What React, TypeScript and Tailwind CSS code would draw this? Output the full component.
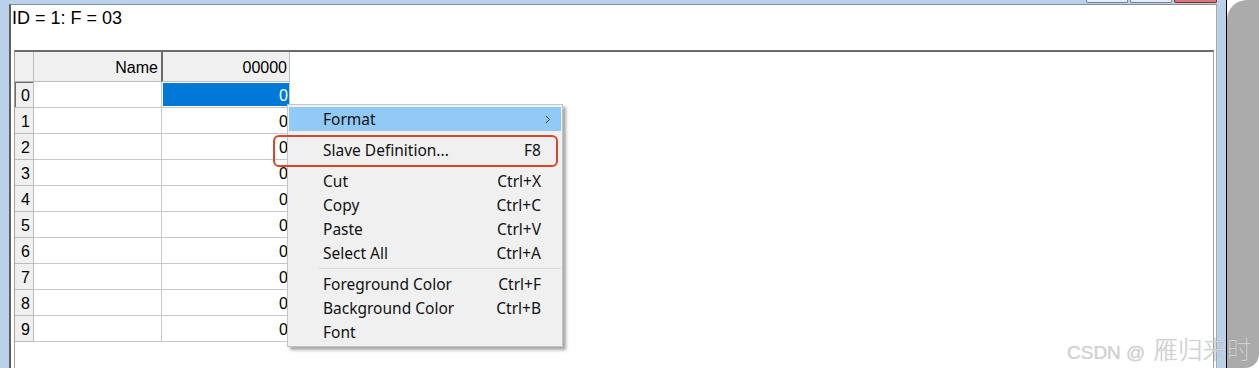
import React from "react";

type MenuItem =
  | { kind: "item"; label: string; shortcut?: string; arrow?: boolean; active?: boolean }
  | { kind: "sep"; line: boolean };

const menuItems: MenuItem[] = [
  { kind: "item", label: "Format", arrow: true, active: true },
  { kind: "sep", line: false },
  { kind: "item", label: "Slave Definition...", shortcut: "F8" },
  { kind: "sep", line: false },
  { kind: "item", label: "Cut", shortcut: "Ctrl+X" },
  { kind: "item", label: "Copy", shortcut: "Ctrl+C" },
  { kind: "item", label: "Paste", shortcut: "Ctrl+V" },
  { kind: "item", label: "Select All", shortcut: "Ctrl+A" },
  { kind: "sep", line: true },
  { kind: "item", label: "Foreground Color", shortcut: "Ctrl+F" },
  { kind: "item", label: "Background Color", shortcut: "Ctrl+B" },
  { kind: "item", label: "Font" },
];

const rows = Array.from({ length: 10 }, (_, i) => i);

function TitleButton({ red }: { red?: boolean }) {
  return (
    <div
      className={
        red
          ? "h-[3px] w-[43px] rounded-b-[2px] border-x border-b border-[#7d2b2b] bg-[#d9787a]"
          : "h-[3px] w-[42px] rounded-b-[2px] border-x border-b border-[#6f7f9c] bg-[#e4ebf4]"
      }
    />
  );
}

function ContextMenu() {
  return (
    <div className="absolute left-[287px] top-[104px] w-[276px] border border-[#c4c4c4] bg-[#f0f0f0] px-[1px] py-[2px] font-['Noto_Sans',sans-serif] text-[15.5px] text-[#111] shadow-[3px_3px_3px_rgba(0,0,0,0.35)]">
      {menuItems.map((m, i) =>
        m.kind === "sep" ? (
          <div key={i} className="flex h-[7px] items-center pl-[30px]">
            {m.line && <div className="h-px w-full bg-[#d7d7d7]" />}
          </div>
        ) : (
          <div
            key={i}
            className={
              "flex h-[24px] items-center pl-[34px] pr-[20px] leading-[24px] " +
              (m.active ? "bg-[#91c9f7]" : "")
            }
          >
            <span className="flex-1">{m.label}</span>
            {m.shortcut && <span>{m.shortcut}</span>}
            {m.arrow && (
              <svg width="6" height="9" viewBox="0 0 6 9" className="mr-[-10px]">
                <polyline points="1,1 4.5,4.5 1,8" fill="none" stroke="#333" strokeWidth="1" />
              </svg>
            )}
          </div>
        )
      )}
    </div>
  );
}

function Grid() {
  return (
    <div className="flex flex-1 flex-col border-x border-t-2 border-x-[#a0a0a0] border-t-[#6b6b6b] bg-white text-[16px] text-black">
      {/* header */}
      <div className="flex h-[30px]">
        <div className="w-[19px] border-b border-r border-[#bcbcbc] bg-[#f0f0f0]" />
        <div className="flex w-[128px] items-center justify-end border-b border-r border-b-[#bcbcbc] border-r-[#6b6b6b] bg-[#f0f0f0] pr-[3px] pt-[2px]">
          Name
        </div>
        <div className="flex w-[128px] items-center justify-end border-b border-r border-[#bcbcbc] bg-[#f0f0f0] pr-[2px] pt-[2px] shadow-[inset_1px_0_0_#6b6b6b]">
          00000
        </div>
      </div>
      {rows.map((r) => (
        <div key={r} className="flex h-[26px]">
          <div
            className={
              "flex w-[19px] items-center border-b border-r border-[#bcbcbc] bg-[#f0f0f0] pl-[6px] pt-[2px] " +
              (r === 0 ? "shadow-[inset_1px_1px_0_#6b6b6b]" : "")
            }
          >
            {r}
          </div>
          <div className="w-[128px] border-b border-r border-[#c8c8c8]" />
          <div className="flex w-[128px] border-b border-r border-[#c8c8c8]">
            <div
              className={
                "flex flex-1 items-center justify-end pr-[1px] pt-[2px] " +
                (r === 0 ? "m-[1px] mr-0 bg-[#0078d7] text-white" : "")
              }
            >
              0
            </div>
          </div>
        </div>
      ))}
    </div>
  );
}

export default function App() {
  return (
    <div className="relative flex h-[368px] w-[1259px] overflow-hidden bg-white font-['Liberation_Sans',Arial,sans-serif]">
      {/* window */}
      <div className="flex h-full w-[1227px] flex-col border-r border-black bg-[#b9d1ea]">
        <div className="flex h-[4px] justify-end gap-[2px] pr-[9px]">
          <TitleButton />
          <TitleButton />
          <TitleButton red />
        </div>
        <div className="flex flex-1">
          <div className="w-[9px]" />
          <div className="flex w-[1208px] flex-col border-l-2 border-r border-t border-l-[#5f5f5f] border-r-[#a9a9a9] border-t-[#8d8d8d] bg-white pl-[3px] pr-[2px]">
            <div className="ml-[-2px] h-[45px] pt-[3px] text-[18px] leading-[21px] text-black">
              ID = 1: F = 03
            </div>
            <Grid />
          </div>
          <div className="flex-1" />
        </div>
      </div>
      {/* window behind */}
      <div className="flex-1 rounded-br-[14px] rounded-tl-[20px] bg-[#ababab]" />

      <ContextMenu />

      {/* annotation */}
      <div className="absolute left-[273px] top-[135px] h-[32px] w-[285px] rounded-[6px] border-2 border-[#d9472b]" />

      {/* watermark */}
      <div className="absolute left-[1067px] top-[331px] flex items-baseline gap-[8px] text-[#d2d2d2] [text-shadow:0_0_1px_rgba(0,0,0,0.18)]">
        <span className="text-[19px]">CSDN @</span>
        <span className="font-['Noto_Sans_CJK_SC',sans-serif] text-[24.5px] font-light">雁归来时</span>
      </div>
    </div>
  );
}
